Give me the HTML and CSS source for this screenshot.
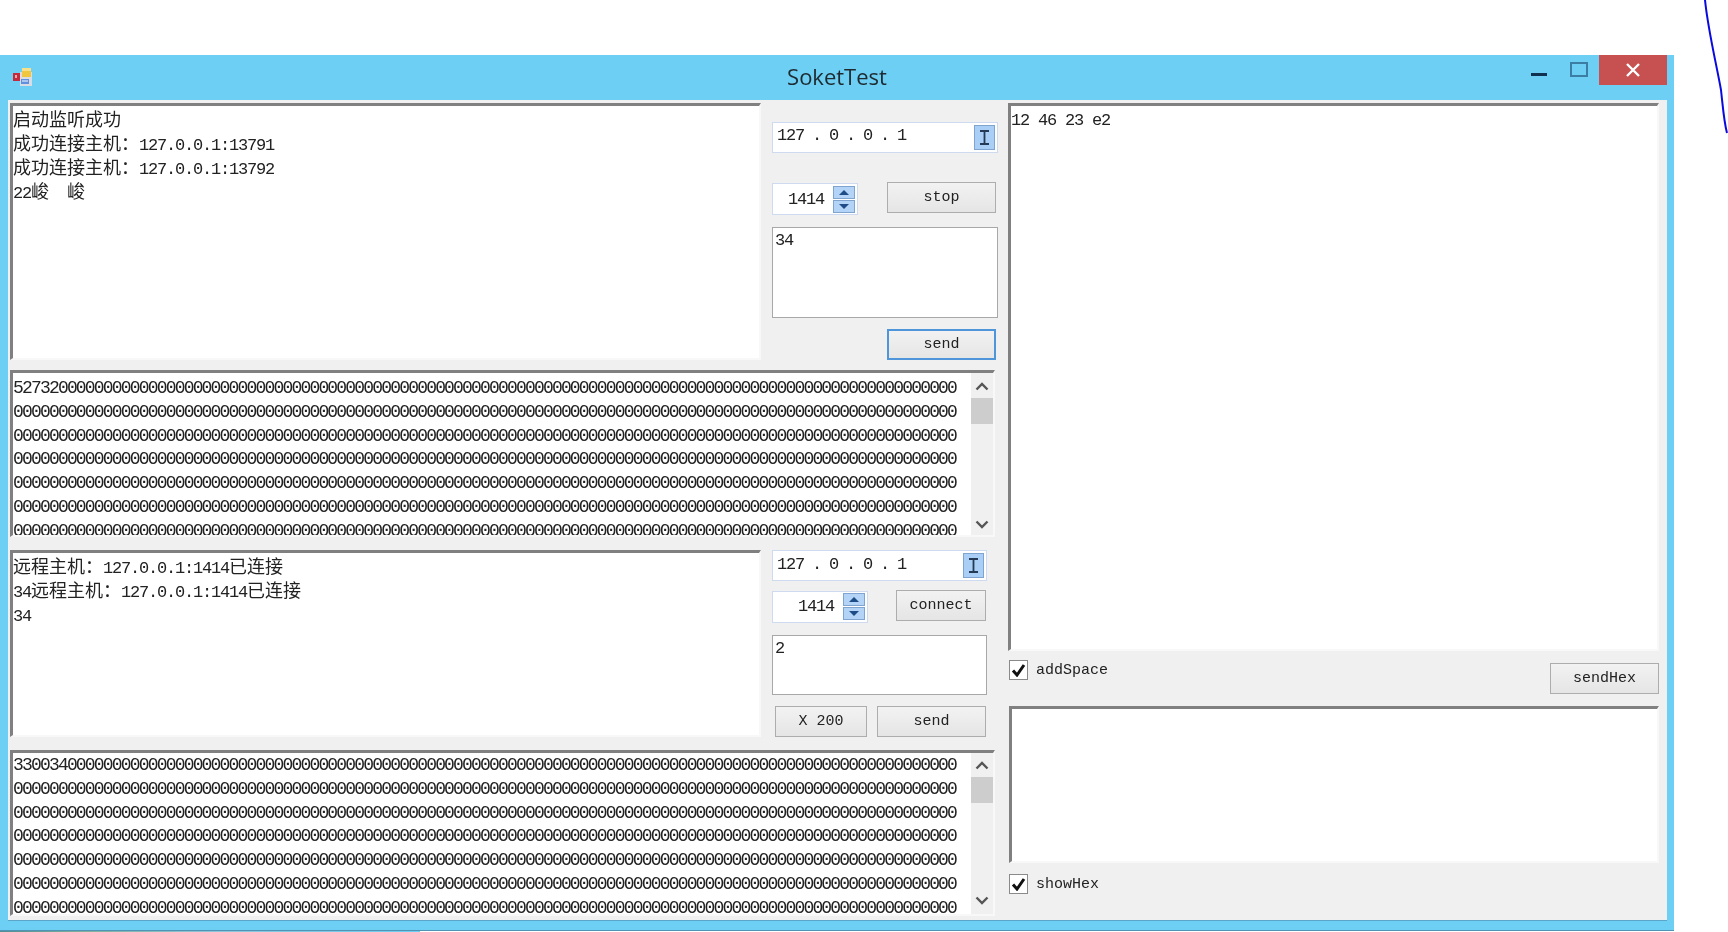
FILE: index.html
```html
<!DOCTYPE html>
<html lang="zh">
<head>
<meta charset="utf-8">
<title>SoketTest</title>
<link rel="stylesheet" href="styles.css">
</head>
<body>
<div class="window">
  <header class="titlebar">
    <svg class="app-icon" width="20" height="22" viewBox="0 0 20 22">
      <rect x="8" y="6" width="12" height="14" fill="#d9dde3"/>
      <rect x="1" y="7" width="7" height="8" fill="#c42a3c"/>
      <rect x="3" y="9" width="2" height="3" fill="#f0a8a8"/>
      <rect x="10" y="2" width="9" height="9" fill="#f0c640"/>
      <rect x="10" y="2" width="9" height="3" fill="#f8e08a"/>
      <rect x="9" y="13" width="8" height="5" fill="#5f8fe0"/>
      <rect x="10" y="14" width="6" height="2" fill="#a9c6f2"/>
    </svg>
    <div class="title">SoketTest</div>
    <div class="caption-btn min"><span class="min-bar"></span></div>
    <div class="caption-btn max"><span class="max-box"></span></div>
    <div class="caption-btn close">
      <svg width="14" height="14" viewBox="0 0 14 14"><path d="M1 1 13 13M13 1 1 13" stroke="#fff" stroke-width="2.400" fill="none"/></svg>
    </div>
  </header>
  <main class="client">
    <section class="left">
      <div class="row server">
        <div class="box log">
          <div><span class="cjk">启动监听成功</span></div>
          <div><span class="cjk">成功连接主机：</span>127.0.0.1:13791</div>
          <div><span class="cjk">成功连接主机：</span>127.0.0.1:13792</div>
          <div>22<span class="cjk">峻　峻</span></div>
        </div>
        <div class="controls server-controls">
          <div class="ip wide-ip">
            <span class="ip-text">127 . 0 . 0 . 1</span>
            <span class="ip-btn"><svg width="11" height="15" viewBox="0 0 11 15"><path d="M1 1h9M1 14h9M5.500 1v13" stroke="#243a55" stroke-width="1.800" fill="none"/></svg></span>
          </div>
          <div class="port-row server-port">
            <div class="port port-a">
              <span class="port-val">1414</span>
              <span class="spin">
                <span class="spin-btn"><i class="tri up"></i></span>
                <span class="spin-btn"><i class="tri down"></i></span>
              </span>
            </div>
            <button class="btn w109">stop</button>
          </div>
          <div class="input input-a">34</div>
          <div class="btn-end"><button class="btn w109 focus">send</button></div>
        </div>
      </div>
      <div class="box hex hex-a">
        <div class="hex-text">
          <div>527320000000000000000000000000000000000000000000000000000000000000000000000000000000000000000000000000000</div>
          <div>000000000000000000000000000000000000000000000000000000000000000000000000000000000000000000000000000000000</div>
          <div>000000000000000000000000000000000000000000000000000000000000000000000000000000000000000000000000000000000</div>
          <div>000000000000000000000000000000000000000000000000000000000000000000000000000000000000000000000000000000000</div>
          <div>000000000000000000000000000000000000000000000000000000000000000000000000000000000000000000000000000000000</div>
          <div>000000000000000000000000000000000000000000000000000000000000000000000000000000000000000000000000000000000</div>
          <div>000000000000000000000000000000000000000000000000000000000000000000000000000000000000000000000000000000000</div>
        </div>
        <div class="scrollbar">
          <span class="arrow"><svg width="14" height="9" viewBox="0 0 14 9"><path d="M1.500 7.500 7 2l5.500 5.500" stroke="#555" stroke-width="2.400" fill="none"/></svg></span>
          <span class="thumb"></span>
          <span class="arrow arrow-down"><svg width="14" height="9" viewBox="0 0 14 9"><path d="M1.500 1.500 7 7l5.500-5.500" stroke="#555" stroke-width="2.400" fill="none"/></svg></span>
        </div>
      </div>
      <div class="row client-row">
        <div class="box log">
          <div><span class="cjk">远程主机：</span>127.0.0.1:1414<span class="cjk">已连接</span></div>
          <div>34<span class="cjk">远程主机：</span>127.0.0.1:1414<span class="cjk">已连接</span></div>
          <div>34</div>
        </div>
        <div class="controls client-controls">
          <div class="ip narrow-ip">
            <span class="ip-text">127 . 0 . 0 . 1</span>
            <span class="ip-btn"><svg width="11" height="15" viewBox="0 0 11 15"><path d="M1 1h9M1 14h9M5.500 1v13" stroke="#243a55" stroke-width="1.800" fill="none"/></svg></span>
          </div>
          <div class="port-row client-port">
            <div class="port port-b">
              <span class="port-val">1414</span>
              <span class="spin">
                <span class="spin-btn"><i class="tri up"></i></span>
                <span class="spin-btn"><i class="tri down"></i></span>
              </span>
            </div>
            <button class="btn w90">connect</button>
          </div>
          <div class="input input-b">2</div>
          <div class="send-row">
            <button class="btn w92">X 200</button>
            <button class="btn w109">send</button>
          </div>
        </div>
      </div>
      <div class="box hex hex-b">
        <div class="hex-text">
          <div>330034000000000000000000000000000000000000000000000000000000000000000000000000000000000000000000000000000</div>
          <div>000000000000000000000000000000000000000000000000000000000000000000000000000000000000000000000000000000000</div>
          <div>000000000000000000000000000000000000000000000000000000000000000000000000000000000000000000000000000000000</div>
          <div>000000000000000000000000000000000000000000000000000000000000000000000000000000000000000000000000000000000</div>
          <div>000000000000000000000000000000000000000000000000000000000000000000000000000000000000000000000000000000000</div>
          <div>000000000000000000000000000000000000000000000000000000000000000000000000000000000000000000000000000000000</div>
          <div>000000000000000000000000000000000000000000000000000000000000000000000000000000000000000000000000000000000</div>
        </div>
        <div class="scrollbar">
          <span class="arrow"><svg width="14" height="9" viewBox="0 0 14 9"><path d="M1.500 7.500 7 2l5.500 5.500" stroke="#555" stroke-width="2.400" fill="none"/></svg></span>
          <span class="thumb"></span>
          <span class="arrow arrow-down"><svg width="14" height="9" viewBox="0 0 14 9"><path d="M1.500 1.500 7 7l5.500-5.500" stroke="#555" stroke-width="2.400" fill="none"/></svg></span>
        </div>
      </div>
    </section>
    <section class="right">
      <div class="box hex-out">12 46 23 e2</div>
      <div class="hex-send-row">
        <label class="check">
          <span class="check-box"><svg width="15" height="14" viewBox="0 0 15 14"><path d="M2 7.500 6 12 13 2" stroke="#111" stroke-width="3" fill="none"/></svg></span>
          <span class="label">addSpace</span>
        </label>
        <button class="btn w109">sendHex</button>
      </div>
      <div class="box hex-in"></div>
      <label class="check show-hex">
        <span class="check-box"><svg width="15" height="14" viewBox="0 0 15 14"><path d="M2 7.500 6 12 13 2" stroke="#111" stroke-width="3" fill="none"/></svg></span>
        <span class="label">showHex</span>
      </label>
    </section>
  </main>
</div>
<div class="desk-strip"></div>
<svg class="pen" width="40" height="140" viewBox="0 0 40 140"><path d="M16 0C19 30 27 62 32 90 34 108 35 122 38 133" stroke="#0a0ae0" stroke-width="2" fill="none"/></svg>
</body>
</html>
```
FILE: styles.css
```css
* { box-sizing: border-box; }
html, body { margin: 0; height: 100%; background: #fff; overflow: hidden; }
body {
  font-family: "Liberation Mono", "Noto Sans CJK SC", monospace;
  font-size: 17px;
  letter-spacing: -1.2px;
  color: #222;
}
.cjk { font-family: "Noto Sans CJK SC", sans-serif; letter-spacing: 0; font-size: 18px; line-height: 0; }

.window {
  position: absolute;
  left: 0;
  top: 55px;
  width: 1674px;
  height: 876px;
  background: #6ccff3;
  padding: 0 7px 10px 8px;
  border-bottom: 1px solid #4f93b5;
  display: flex;
  flex-direction: column;
  filter: blur(0.35px);
}
.titlebar {
  height: 45px;
  flex: none;
  display: flex;
  align-items: flex-start;
  position: relative;
  margin-left: -8px;
  margin-right: -7px;
}
.app-icon { position: absolute; left: 12px; top: 11px; }
.title {
  position: absolute;
  left: 0;
  right: 0;
  top: 7px;
  text-align: center;
  font-family: "Open Sans", sans-serif;
  font-size: 22px;
  letter-spacing: 0;
  line-height: 28px;
  color: #1e2a30;
}
.caption-btn { position: absolute; top: 0; display: flex; align-items: center; justify-content: center; }
.min { left: 1531px; top: 18px; }
.min-bar { display: block; width: 16px; height: 3px; background: #12304f; }
.max { left: 1570px; top: 7px; }
.max-box { display: block; width: 18px; height: 15px; border: 2px solid #3b7da3; }
.close { left: 1599px; width: 68px; height: 30px; background: #c75050; }

.client {
  flex: 1;
  min-height: 0;
  background: #f0f0f0;
  display: flex;
  gap: 10px;
  padding: 3px 8px 0 2px;
  box-shadow: 0 1px 0 #5aa5c8;
}
.left { width: 988px; flex: none; display: flex; flex-direction: column; }
.right { width: 651px; flex: none; display: flex; flex-direction: column; }
.row { display: flex; gap: 11px; flex: none; }
.server { height: 257px; }
.client-row { height: 187px; margin-top: 13px; }

.box {
  background: #fff;
  border-top: 3px solid #808080;
  border-left: 3px solid #808080;
  border-right: 2px solid #f8f8f8;
  border-bottom: 2px solid #f8f8f8;
  line-height: 24px;
  overflow: hidden;
}
.log { width: 751px; flex: none; padding-top: 4px; }

.controls { width: 226px; flex: none; display: flex; flex-direction: column; }
.server-controls { padding-top: 19px; }
.ip {
  height: 31px;
  background: #fff;
  border: 1px solid #cddaf0;
  display: flex;
  align-items: center;
  justify-content: space-between;
  padding: 0 2px 0 4px;
}
.wide-ip { width: 226px; }
.narrow-ip { width: 215px; }
.ip-text { word-spacing: -1px; position: relative; top: -1px; }
.wide-ip .ip-text { top: -2px; }
.ip-btn {
  width: 21px;
  height: 25px;
  background: #a9cff6;
  border: 1px solid #7fa4cf;
  display: flex;
  align-items: center;
  justify-content: center;
}
.port-row { display: flex; justify-content: space-between; align-items: flex-start; }
.server-port { margin-top: 29px; width: 224px; }
.client-port { margin-top: 9px; width: 214px; }
.port {
  height: 32px;
  margin-top: 1px;
  background: #fff;
  border: 1px solid #cddaf0;
  display: flex;
  align-items: center;
  justify-content: flex-end;
  padding-right: 2px;
}
.port-a { width: 86px; }
.port-b { width: 96px; }
.port-val { margin-right: 9px; }
.spin { width: 22px; display: flex; flex-direction: column; gap: 1px; }
.spin-btn {
  height: 13px;
  background: #b3d4f7;
  border: 1px solid #7fa4cf;
  display: flex;
  align-items: center;
  justify-content: center;
}
.tri { display: block; width: 0; height: 0; border-left: 5px solid transparent; border-right: 5px solid transparent; }
.tri.up { border-bottom: 5px solid #1d4c86; }
.tri.down { border-top: 5px solid #1d4c86; }

.btn {
  height: 31px;
  padding: 0;
  font-family: inherit;
  font-size: 15px;
  letter-spacing: 0;
  color: #222;
  background: linear-gradient(#f2f2f2, #e5e5e5);
  border: 1px solid #adadad;
  border-radius: 0;
  line-height: 1;
  flex: none;
}
.btn.focus { border: 2px solid #4f95d9; }
.w109 { width: 109px; }
.w92 { width: 92px; }
.w90 { width: 90px; }

.input {
  background: #fff;
  border: 1px solid #a8a8a8;
  line-height: 24px;
  padding: 1px 2px 0;
}
.input-a { width: 226px; height: 91px; margin-top: 12px; }
.input-b { width: 215px; height: 61px; margin-top: 12px; }
.btn-end { display: flex; justify-content: flex-end; width: 224px; margin-top: 11px; }
.send-row { display: flex; justify-content: space-between; width: 214px; padding-left: 3px; margin-top: 11px; }

.hex { display: flex; flex: none; width: 985px; line-height: 23.800px; font-size: 18px; letter-spacing: -1.820px; padding-top: 0; }
.hex-a { height: 167px; margin-top: 10px; }
.hex-b { height: 166px; margin-top: 13px; }
.hex-text { flex: 1; min-width: 0; overflow: hidden; white-space: nowrap; }
.hex-a .hex-text { padding-top: 4px; }
.hex-b .hex-text { padding-top: 1px; }
.scrollbar {
  width: 22px;
  flex: none;
  background: #f0f0f0;
  display: flex;
  flex-direction: column;
  align-items: stretch;
}
.arrow { height: 25px; flex: none; display: flex; align-items: center; justify-content: center; padding-top: 2px; }
.arrow-down { margin-top: auto; padding-top: 4px; }
.hex-b .arrow { height: 24px; padding-top: 0; }
.hex-b .arrow-down { margin-bottom: 2px; }
.thumb { height: 26px; flex: none; background: #cdcdcd; }

.hex-out { height: 548px; padding-top: 3px; flex: none; }
.hex-send-row { display: flex; justify-content: space-between; align-items: flex-start; margin-top: 9px; }
.hex-send-row .btn { margin-top: 3px; }
.check { display: flex; align-items: center; gap: 8px; height: 20px; margin-left: 1px; }
.label { font-size: 15px; letter-spacing: 0; }
.check-box {
  width: 19px;
  height: 20px;
  background: #fff;
  border: 1px solid #8a8a8a;
  display: flex;
  align-items: center;
  justify-content: center;
}
.hex-in { height: 157px; margin-top: 12px; margin-left: 1px; flex: none; }
.show-hex { margin-top: 11px; }

.desk-strip {
  position: absolute;
  left: 0;
  top: 931px;
  width: 420px;
  height: 1px;
  background: linear-gradient(90deg, #4f8f95, #7fb0a0 20%, #8fc4d8 50%, #6ccff3);
}
.pen { position: absolute; left: 1689px; top: 0; }
```
